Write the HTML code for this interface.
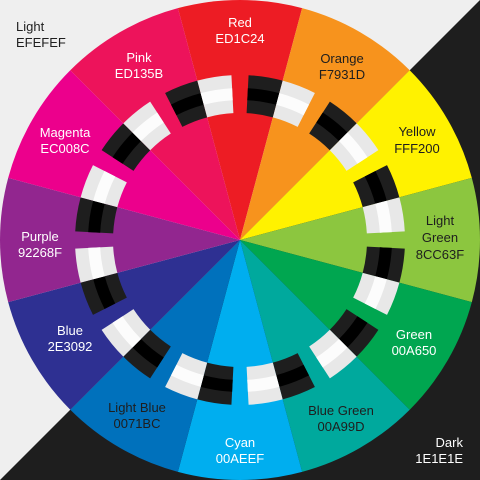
<!DOCTYPE html>
<html><head><meta charset="utf-8"><style>
html,body{margin:0;padding:0;background:#efefef}
svg{display:block}
text{font-family:"Liberation Sans",sans-serif;font-size:13px;text-anchor:middle}
</style></head><body>
<svg width="480" height="480" viewBox="0 0 480 480" xmlns="http://www.w3.org/2000/svg">
<rect width="480" height="480" fill="#efefef"/>
<polygon points="480,0 480,480 0,480" fill="#1e1e1e"/>
<g>
<path d="M240 240 L177.88 8.18 A240 240 0 0 1 302.12 8.18Z" fill="#ED1C24"/>
<path d="M240 240 L302.12 8.18 A240 240 0 0 1 409.71 70.29Z" fill="#F7931D"/>
<path d="M240 240 L409.71 70.29 A240 240 0 0 1 471.82 177.88Z" fill="#FFF200"/>
<path d="M240 240 L471.82 177.88 A240 240 0 0 1 471.82 302.12Z" fill="#8CC63F"/>
<path d="M240 240 L471.82 302.12 A240 240 0 0 1 409.71 409.71Z" fill="#00A650"/>
<path d="M240 240 L409.71 409.71 A240 240 0 0 1 302.12 471.82Z" fill="#00A99D"/>
<path d="M240 240 L302.12 471.82 A240 240 0 0 1 177.88 471.82Z" fill="#00AEEF"/>
<path d="M240 240 L177.88 471.82 A240 240 0 0 1 70.29 409.71Z" fill="#0071BC"/>
<path d="M240 240 L70.29 409.71 A240 240 0 0 1 8.18 302.12Z" fill="#2E3092"/>
<path d="M240 240 L8.18 302.12 A240 240 0 0 1 8.18 177.88Z" fill="#92268F"/>
<path d="M240 240 L8.18 177.88 A240 240 0 0 1 70.29 70.29Z" fill="#EC008C"/>
<path d="M240 240 L70.29 70.29 A240 240 0 0 1 177.88 8.18Z" fill="#ED135B"/>
</g>
<g fill="none">
<circle cx="240" cy="240" r="146" pathLength="360" stroke="#1e1e1e" stroke-width="38" stroke-dasharray="12 18" stroke-dashoffset="-3"/>
<circle cx="240" cy="240" r="146" pathLength="360" stroke="#000" stroke-width="12" stroke-dasharray="12 18" stroke-dashoffset="-3"/>
<circle cx="240" cy="240" r="146" pathLength="360" stroke="#e8e8e8" stroke-width="38" stroke-dasharray="12 18" stroke-dashoffset="-15"/>
<circle cx="240" cy="240" r="146" pathLength="360" stroke="#fcfcfc" stroke-width="12" stroke-dasharray="12 18" stroke-dashoffset="-15"/>
</g>
<g fill="#fff">
<text x="240" y="27">Red</text><text x="240" y="43">ED1C24</text>
<text x="139" y="62">Pink</text><text x="139" y="78">ED135B</text>
<text x="65" y="137">Magenta</text><text x="65" y="153">EC008C</text>
<text x="40" y="241">Purple</text><text x="40" y="257">92268F</text>
<text x="70" y="335">Blue</text><text x="70" y="351">2E3092</text>
<text x="240" y="447">Cyan</text><text x="240" y="463">00AEEF</text>
<text x="414" y="339">Green</text><text x="414" y="355">00A650</text>
<text x="463" y="447" style="text-anchor:end">Dark</text><text x="463" y="463" style="text-anchor:end">1E1E1E</text>
</g>
<g fill="#1e1e1e">
<text x="342" y="63">Orange</text><text x="342" y="79">F7931D</text>
<text x="417" y="136">Yellow</text><text x="417" y="153">FFF200</text>
<text x="440" y="225">Light</text><text x="440" y="242">Green</text><text x="440" y="259">8CC63F</text>
<text x="341" y="415">Blue Green</text><text x="341" y="431">00A99D</text>
<text x="137" y="412">Light Blue</text><text x="137" y="428">0071BC</text>
<text x="16" y="31" style="text-anchor:start">Light</text><text x="16" y="47" style="text-anchor:start">EFEFEF</text>
</g>
</svg>
</body></html>
